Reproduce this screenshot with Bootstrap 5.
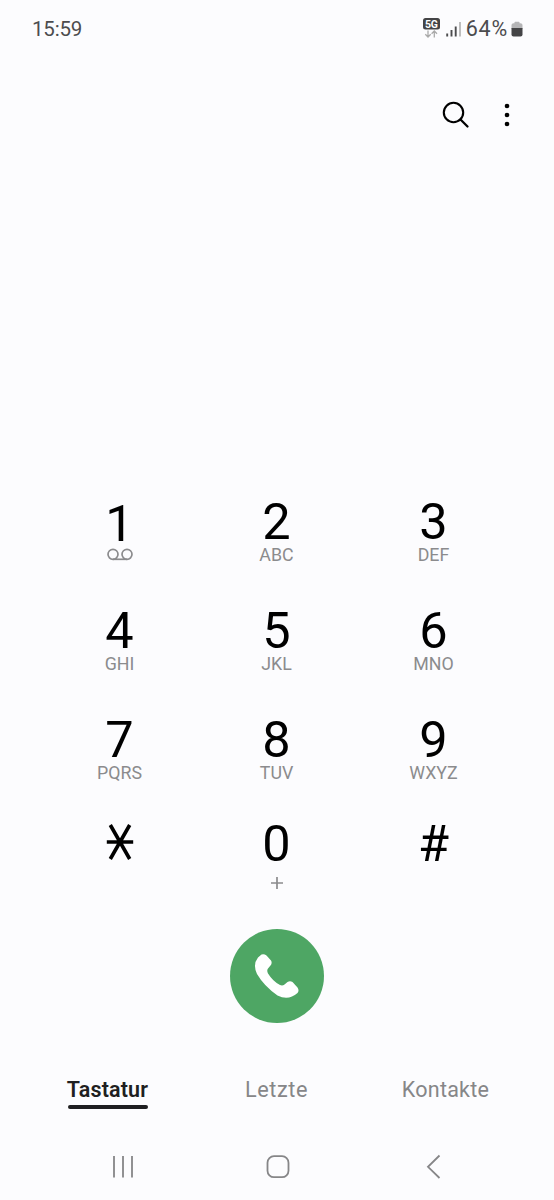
<!DOCTYPE html>
<html lang="de">
<head>
<meta charset="utf-8">
<meta name="viewport" content="width=device-width, initial-scale=1">
<title>Telefon</title>
<link href="https://cdn.jsdelivr.net/npm/bootstrap@5.3.0/dist/css/bootstrap.min.css" rel="stylesheet">
<style>
body{background:#fcfcfe;font-family:Roboto,"Liberation Sans",sans-serif;color:#000}
.phone{height:1200px;width:554px;overflow:hidden}
.phone svg{display:block;flex:none;overflow:visible}
.status{height:58px;padding:0 31px 0 32px;font-size:20.5px;line-height:58px;color:#4c4c4e}
.clock{letter-spacing:-.2px}
.level{font-size:21.5px;letter-spacing:.8px;margin:0 3px 0 0}
.tools{height:114px;padding:0 38px 0 0}
.search{margin-right:27px}
.pad{padding:0 42px 0 41px;margin-bottom:21px}
.pad .row{height:109px}
.pad .row:nth-child(3){height:104px}
.pad .row:nth-child(4){height:88px}
.digit{font-size:50.5px;line-height:48px;height:47px}
.digit.low{padding-top:2px}
.sub{font-size:17.8px;line-height:20px;height:20px;color:#8b8b8d}
.call{width:94px;height:94px;background:#4ea664;border-radius:50%}
.tabs{padding:0 24px 0 23px;margin-top:52px;height:53px;font-size:21.5px;line-height:30px;color:#868688}
.tabs .on{color:#1f1f21;font-weight:600}
.t1{letter-spacing:.15px}
.t2{letter-spacing:.6px;font-size:21.7px}
.t3{letter-spacing:.25px}
.bar{width:80px;height:4px;border-radius:2px;background:#1f1f21}
.sysnav{padding:0 45.5px;height:72px}
</style>
</head>
<body>
<main class="phone d-flex flex-column">
  <header class="status d-flex justify-content-between align-items-center">
    <span class="clock">15:59</span>
    <div class="d-flex align-items-center">
      <svg width="44" height="24" viewBox="0 0 44 24">
        <rect x="1" y="1" width="17" height="11.500" rx="2.500" fill="#444446"/>
        <text x="9.500" y="10.500" text-anchor="middle" font-family="Roboto" font-weight="700" font-size="10.500" fill="#fff" textLength="13">5G</text>
        <path d="M6 13.500V20M3.300 17.300 6 20l2.700-2.700M12.300 20.500V14M9.600 16.700l2.700-2.700 2.700 2.700" fill="none" stroke="#aaa" stroke-width="1.300"/>
        <path d="M25.200 16.500V19.500M29.500 13V19.500M33.700 9.500V19.500" stroke="#4c4c4e" stroke-width="1.900"/>
        <path d="M38 5V19.500" stroke="#bbb" stroke-width="1.900"/>
      </svg>
      <span class="level">64%</span>
      <svg class="batt" width="12" height="16" viewBox="0 0 12 18" preserveAspectRatio="none">
        <path d="M3.500 2.500V1.500Q3.500 .8 4.200 .8H7.800Q8.500 .8 8.500 1.500V2.500H9.500Q11.500 2.500 11.500 4.500V9H.5V4.500Q.5 2.500 2.500 2.500Z" fill="#b5b5b7"/>
        <path d="M.5 8H11.500V15.500Q11.500 17.500 9.500 17.500H2.500Q.5 17.500 .5 15.500Z" fill="#444446"/>
      </svg>
    </div>
  </header>

  <div class="tools d-flex justify-content-end align-items-center">
    <svg class="search" width="30" height="30" viewBox="0 0 30 30"><circle cx="12.500" cy="12.500" r="9.700" fill="none" stroke="#000" stroke-width="2.100"/><path d="M19.500 19.500 26.500 26.500" stroke="#000" stroke-width="2.300" stroke-linecap="round"/></svg>
    <svg width="18" height="30" viewBox="0 0 18 30"><circle cx="9" cy="6" r="2.300"/><circle cx="9" cy="15" r="2.300"/><circle cx="9" cy="24" r="2.300"/></svg>
  </div>

  <section class="pad mt-auto text-center">
    <div class="row g-0">
      <div class="col"><div class="digit low">1</div><div class="sub"><svg class="mx-auto" width="26" height="18" viewBox="0 0 26 18"><g fill="none" stroke="#8b8b8d" stroke-width="1.700"><circle cx="6" cy="9.300" r="5"/><circle cx="20" cy="9.300" r="5"/><path d="M6 14.300H20"/></g></svg></div></div>
      <div class="col"><div class="digit">2</div><div class="sub">ABC</div></div>
      <div class="col"><div class="digit">3</div><div class="sub">DEF</div></div>
    </div>
    <div class="row g-0">
      <div class="col"><div class="digit">4</div><div class="sub">GHI</div></div>
      <div class="col"><div class="digit">5</div><div class="sub">JKL</div></div>
      <div class="col"><div class="digit">6</div><div class="sub">MNO</div></div>
    </div>
    <div class="row g-0">
      <div class="col"><div class="digit">7</div><div class="sub">PQRS</div></div>
      <div class="col"><div class="digit">8</div><div class="sub">TUV</div></div>
      <div class="col"><div class="digit">9</div><div class="sub">WXYZ</div></div>
    </div>
    <div class="row g-0">
      <div class="col"><svg class="mx-auto" width="28" height="44" viewBox="0 0 28 44"><path d="M.8 22H27.200M4.300 5 23.700 39M23.700 5 4.300 39" stroke="#000" stroke-width="3.600"/></svg></div>
      <div class="col"><div class="digit">0</div><svg class="mx-auto mt-2" width="12" height="14" viewBox="0 0 12 14"><path d="M6 2V14M0 8H12" stroke="#8b8b8d" stroke-width="1.700"/></svg></div>
      <div class="col"><div class="digit">#</div></div>
    </div>
  </section>

  <button type="button" class="call btn border-0 p-0 mx-auto flex-shrink-0 d-flex align-items-center justify-content-center" aria-label="Anrufen">
    <svg width="94" height="94" viewBox="0 0 94 94"><path d="M28 28.500L31.500 25.500Q34 24.500 36.500 26.500L41 31.500Q42.500 34 40.500 36.500L38 39.500Q36.500 41.500 38 44.500Q43 52.500 50 56Q52.500 57 54.500 55.500L57.500 53Q60 51.500 62.500 53L67.500 58.500Q69.500 61.500 67.500 64Q58.500 72 47.500 66.500Q34 57 27 45Q22.500 35.500 28 28.500Z" fill="#fff"/></svg>
  </button>

  <nav class="tabs row g-0 text-center flex-shrink-0">
    <div class="col on"><span class="t1">Tastatur</span><div class="bar mx-auto"></div></div>
    <div class="col"><span class="t2">Letzte</span></div>
    <div class="col"><span class="t3">Kontakte</span></div>
  </nav>

  <nav class="sysnav row g-0 flex-shrink-0">
    <div class="col"><svg class="mx-auto" width="24" height="60" viewBox="0 0 24 60"><path d="M3 28V49.500M12 28V49.500M21 28V49.500" stroke="#868688" stroke-width="1.800"/></svg></div>
    <div class="col"><svg class="mx-auto" width="24" height="60" viewBox="0 0 24 60"><rect x="2.500" y="28.200" width="21" height="21" rx="6.500" fill="none" stroke="#868688" stroke-width="1.800"/></svg></div>
    <div class="col"><svg class="mx-auto" width="24" height="60" viewBox="0 0 24 60"><path d="M20.500 27.500 9 38.800 20.500 50" fill="none" stroke="#868688" stroke-width="1.800"/></svg></div>
  </nav>
</main>
<script src="https://cdn.jsdelivr.net/npm/bootstrap@5.3.0/dist/js/bootstrap.bundle.min.js"></script>
</body>
</html>
